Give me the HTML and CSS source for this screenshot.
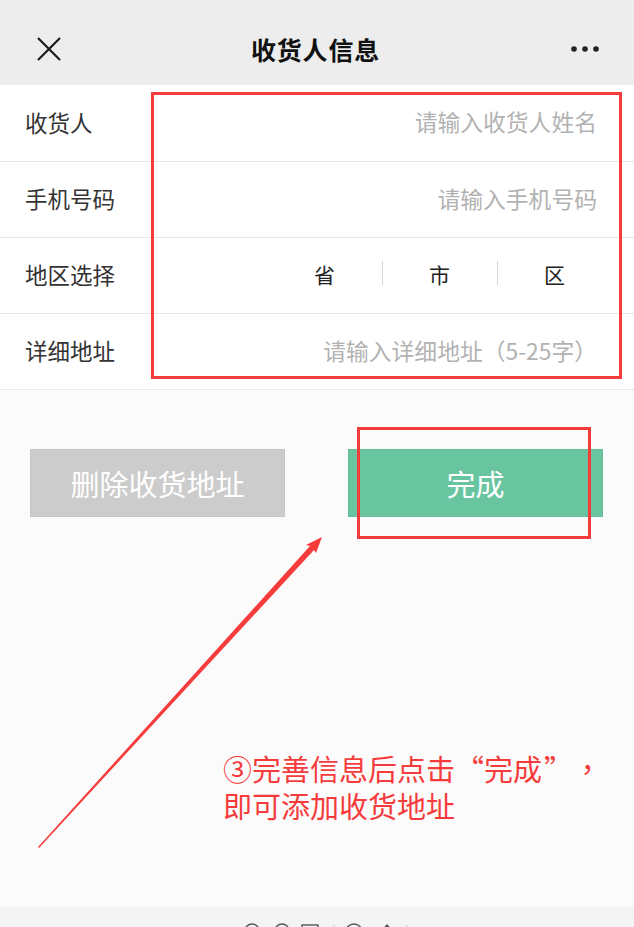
FILE: index.html
```html
<!DOCTYPE html>
<html lang="zh-CN">
<head>
<meta charset="utf-8">
<title>收货人信息</title>
<link rel="stylesheet" href="styles.css">
</head>
<body>
<div class="page">
  <header class="nav">
    <svg class="nav-close" width="24" height="24" viewBox="0 0 24 24"><path d="M1 1 L23 23 M23 1 L1 23" stroke="#1a1a1a" stroke-width="2.2" fill="none"/></svg>
    <h1 class="nav-title">收货人信息</h1>
    <svg class="nav-more" width="30" height="8" viewBox="0 0 30 8"><circle cx="4" cy="4" r="2.8" fill="#222"/><circle cx="15" cy="4" r="2.8" fill="#222"/><circle cx="26" cy="4" r="2.8" fill="#222"/></svg>
  </header>

  <section class="form">
    <div class="row">
      <span class="label">收货人</span>
      <span class="placeholder">请输入收货人姓名</span>
    </div>
    <div class="row">
      <span class="label">手机号码</span>
      <span class="placeholder">请输入手机号码</span>
    </div>
    <div class="row row-region">
      <span class="label">地区选择</span>
      <div class="region">
        <span class="region-cell">省</span>
        <span class="region-cell">市</span>
        <span class="region-cell">区</span>
      </div>
    </div>
    <div class="row">
      <span class="label">详细地址</span>
      <span class="placeholder">请输入详细地址（5-25字）</span>
    </div>
  </section>

  <section class="actions">
    <button class="btn btn-gray">删除收货地址</button>
    <button class="btn btn-green">完成</button>
  </section>

  <footer class="toolbar">
    <svg class="toolbar-icons" width="220" height="20" viewBox="0 0 220 20">
      <g fill="none" stroke="#555" stroke-width="1.4">
        <circle cx="48" cy="24" r="7"/>
        <circle cx="78" cy="24" r="7"/>
        <rect x="98" y="18" width="16" height="12"/>
        <circle cx="150" cy="25" r="8"/>
        <path d="M176 26 L183 18 L190 26"/>
        <path d="M225 16 L225 30"/>
      </g>
      <g stroke="#ccc" stroke-width="1">
        <path d="M130 18 L130 30"/>
        <path d="M203 18 L203 30"/>
      </g>
    </svg>
  </footer>

  <div class="annot">
    <div class="annot-box annot-box-form"></div>
    <div class="annot-box annot-box-btn"></div>
    <svg class="annot-arrow" width="634" height="927" viewBox="0 0 634 927">
      <polygon points="38,847 39,848 314,550 316,553 322,537 306,545 310,546" fill="#f53b3b"/>
    </svg>
    <div class="annot-text">
      <p class="annot-line">③完善信息后点击<span class="q q-open">“</span>完成<span class="q q-close">”</span><span class="q comma">，</span></p>
      <p class="annot-line">即可添加收货地址</p>
    </div>
  </div>
</div>
</body>
</html>
```

FILE: styles.css
```css
* { box-sizing: border-box; }
html, body { margin: 0; padding: 0; }
body {
  font-family: "Noto Sans CJK SC", "Noto Sans", sans-serif;
  background: #fbfbfb;
}
.page {
  position: relative;
  width: 634px;
  height: 927px;
  overflow: hidden;
  display: flex;
  flex-direction: column;
}
.nav {
  height: 85px;
  background: #ededed;
  display: flex;
  align-items: center;
  justify-content: space-between;
  padding: 13px 34px 0 37px;
}
.nav-title {
  margin: 0;
  font-size: 25px;
  font-weight: 700;
  color: #111;
  letter-spacing: 0.8px;
}

.form {
  background: #fff;
  border-bottom: 1px solid #e6e6e6;
}
.row {
  height: 76px;
  display: flex;
  align-items: center;
  justify-content: space-between;
  padding: 0 37px 3px 25px;
  border-top: 1px solid #e6e6e6;
}
.row:first-child { border-top: none; }
.label {
  font-size: 22.5px;
  color: #333;
}
.placeholder {
  font-size: 22.8px;
  color: #b2b2b2;
}
.row-region { padding-right: 22px; }
.region {
  display: flex;
  align-items: center;
}
.region-cell {
  width: 115px;
  text-align: center;
  font-size: 21px;
  color: #222;
  position: relative;
}
.region-cell + .region-cell::before {
  content: "";
  position: absolute;
  left: 0;
  top: 2px;
  height: 24px;
  border-left: 1px solid #d6d6d6;
}

.actions {
  display: flex;
  justify-content: space-between;
  padding: 59px 31px 0 30px;
}
.btn {
  width: 255px;
  height: 68px;
  border: 1px solid rgba(0,0,0,0.03);
  font-family: inherit;
  font-size: 29px;
  color: #fff;
  padding: 0;
}
.btn-gray { background: #cccccc; }
.btn-green { background: #68c59f; }

.toolbar {
  margin-top: auto;
  height: 20px;
  background: #f4f4f4;
  display: flex;
  justify-content: center;
}
.toolbar-icons { margin-left: -6px; }

.annot { position: absolute; inset: 0; pointer-events: none; }
.annot-box {
  position: absolute;
  border: 3px solid #f53b3b;
}
.annot-box-form { left: 151px; top: 92px; width: 471px; height: 287px; }
.annot-box-btn { left: 357px; top: 427px; width: 234px; height: 112px; }
.annot-arrow { position: absolute; left: 0; top: 0; }
.annot-text {
  position: absolute;
  left: 223px;
  top: 750px;
  font-size: 29px;
  color: #f53b3b;
  white-space: nowrap;
}
.annot-line { margin: 0; height: 37px; line-height: 37px; }
.q { display: inline-block; width: 29px; }
.q-open { text-align: right; padding-right: 2px; }
.q-close { text-align: left; padding-left: 2px; }
.comma { font-family: "Noto Sans CJK TC", sans-serif; text-align: left; padding-left: 2px; }
```
